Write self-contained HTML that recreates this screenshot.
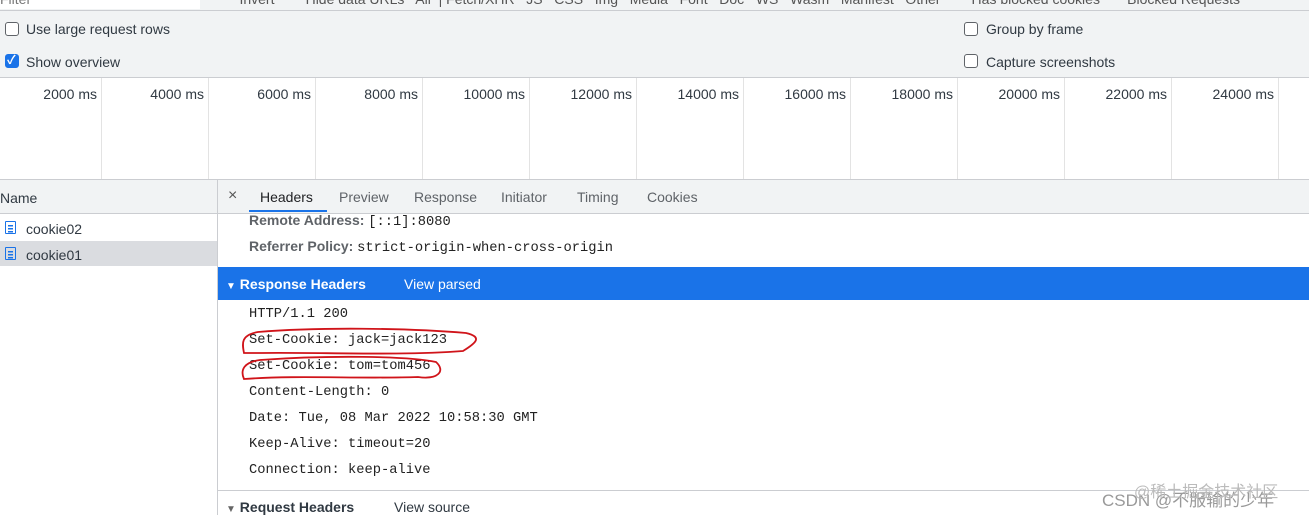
<!DOCTYPE html>
<html><head><meta charset="utf-8"><style>
*{margin:0;padding:0;box-sizing:border-box}
body{width:1309px;height:515px;overflow:hidden;background:#fff;font-family:"Liberation Sans","Noto Sans CJK SC",sans-serif;font-size:14px;color:#303942;position:relative}
.a{position:absolute;white-space:nowrap}
.cb{position:absolute;width:14px;height:14px;border:1.5px solid #5f6368;border-radius:3px;background:#fff}
.cb.on{background:#1a73e8;border-color:#1a73e8}
.mono{font-family:"Liberation Mono",monospace;font-size:13.75px;color:#222}
.doc{position:absolute;width:11px;height:13px;border:1.5px solid #1a73e8;border-radius:1px;background:linear-gradient(#1a73e8,#1a73e8) 2px 3px/5px 1.5px no-repeat,linear-gradient(#1a73e8,#1a73e8) 2px 6px/5px 1.5px no-repeat,linear-gradient(#1a73e8,#1a73e8) 2px 9px/5px 1.5px no-repeat}
</style></head><body>
<div class="a" style="left:0;top:0;width:1309px;height:78px;background:#f1f3f4;border-bottom:1px solid #cbcdd1"></div>
<div class="a" style="left:0;top:0;width:200px;height:9px;background:#fff"></div>
<div class="a" style="left:0;top:10px;width:1309px;height:1px;background:#cbcdd1"></div>
<div class="a" style="left:0;top:-9px;color:#777">Filter</div>
<div class="a" style="left:220px;top:-9px;color:#555">&nbsp;&nbsp;&nbsp;&nbsp;&nbsp;Invert &nbsp;&nbsp;&nbsp;&nbsp;&nbsp;&nbsp; Hide data URLs &nbsp; All &nbsp;| Fetch/XHR &nbsp; JS &nbsp; CSS &nbsp; Img &nbsp; Media &nbsp; Font &nbsp; Doc &nbsp; WS &nbsp; Wasm &nbsp; Manifest &nbsp; Other &nbsp;&nbsp;&nbsp;&nbsp;&nbsp;&nbsp; Has blocked cookies &nbsp;&nbsp;&nbsp;&nbsp;&nbsp; Blocked Requests</div>
<div class="cb" style="left:5px;top:22px"></div><div class="a" style="left:26px;top:21px">Use large request rows</div>
<div class="cb on" style="left:5px;top:54px"></div><div class="a" style="left:7px;top:51px;color:#fff;font-size:12px;font-weight:bold">✓</div><div class="a" style="left:26px;top:54px">Show overview</div>
<div class="cb" style="left:964px;top:22px"></div><div class="a" style="left:986px;top:21px">Group by frame</div>
<div class="cb" style="left:964px;top:54px"></div><div class="a" style="left:986px;top:54px">Capture screenshots</div>
<div class="a" style="left:0;top:179px;width:1309px;height:1px;background:#cbcdd1"></div>
<div id="grid"></div>
<script>
var g='',xs=[101,208,315,422,529,636,743,850,957,1064,1171,1278];
for(var i=0;i<12;i++){g+='<div class="a" style="left:'+xs[i]+'px;top:78px;width:1px;height:101px;background:#e3e3e3"></div><div class="a" style="left:'+(xs[i]-200)+'px;width:196px;text-align:right;top:86px">'+(2000*(i+1))+' ms</div>';}
document.getElementById('grid').innerHTML=g;
</script>
<div class="a" style="left:0;top:180px;width:217px;height:34px;background:#f1f3f4;border-bottom:1px solid #cbcdd1"></div>
<div class="a" style="left:0;top:190px">Name</div>
<div class="a" style="left:217px;top:180px;width:1px;height:335px;background:#cbcdd1"></div>
<div class="a" style="left:0;top:241px;width:217px;height:25px;background:#dadce0"></div>
<div class="doc" style="left:5px;top:221px"></div>
<div class="doc" style="left:5px;top:247px"></div>
<div class="a" style="left:26px;top:221px">cookie02</div>
<div class="a" style="left:26px;top:247px">cookie01</div>
<div class="a" style="left:218px;top:180px;width:1091px;height:34px;background:#f1f3f4;border-bottom:1px solid #cbcdd1"></div>
<div class="a" style="left:228px;top:187px;font-size:16px;color:#555">×</div>
<div class="a" style="left:260px;top:189px;color:#202124">Headers</div>
<div class="a" style="left:249px;top:210px;width:78px;height:2px;background:#1a73e8"></div>
<div class="a" style="left:339px;top:189px;color:#5f6368">Preview</div>
<div class="a" style="left:414px;top:189px;color:#5f6368">Response</div>
<div class="a" style="left:501px;top:189px;color:#5f6368">Initiator</div>
<div class="a" style="left:577px;top:189px;color:#5f6368">Timing</div>
<div class="a" style="left:647px;top:189px;color:#5f6368">Cookies</div>
<div class="a" style="left:249px;top:212px;font-weight:bold;color:#5f6368">Remote Address: <span class="mono" style="font-weight:normal">[::1]:8080</span></div>
<div class="a" style="left:249px;top:238px;font-weight:bold;color:#5f6368">Referrer Policy: <span class="mono" style="font-weight:normal">strict-origin-when-cross-origin</span></div>
<div class="a" style="left:218px;top:267px;width:1091px;height:33px;background:#1a73e8"></div>
<div class="a" style="left:226px;top:276px;color:#fff;font-weight:bold"><span style="font-size:10px">▼</span> Response Headers</div>
<div class="a" style="left:404px;top:276px;color:#fff">View parsed</div>
<div class="a mono" style="left:249px;top:307px">HTTP/1.1 200</div>
<div class="a mono" style="left:249px;top:333px">Set-Cookie: jack=jack123</div>
<div class="a mono" style="left:249px;top:359px">Set-Cookie: tom=tom456</div>
<div class="a mono" style="left:249px;top:385px">Content-Length: 0</div>
<div class="a mono" style="left:249px;top:411px">Date: Tue, 08 Mar 2022 10:58:30 GMT</div>
<div class="a mono" style="left:249px;top:437px">Keep-Alive: timeout=20</div>
<div class="a mono" style="left:249px;top:463px">Connection: keep-alive</div>
<svg class="a" style="left:238px;top:325px" width="245" height="60" viewBox="0 0 245 60">
<path d="M6 28 C4 18 3 10 20 7 C80 2 170 3 228 8 C245 12 238 18 225 26 C160 31 80 27 20 28 Z" fill="none" stroke="#d0141a" stroke-width="1.8"/>
<path d="M6 54 C2 45 6 37 22 35 C90 30 170 31 198 37 C208 46 200 55 180 52 C120 54 60 50 6 54 Z" fill="none" stroke="#d0141a" stroke-width="1.8"/>
</svg>
<div class="a" style="left:218px;top:490px;width:1091px;height:1px;background:#cbcdd1"></div>
<div class="a" style="left:226px;top:499px;color:#303942;font-weight:bold"><span style="font-size:10px;color:#666">▼</span> Request Headers</div>
<div class="a" style="left:394px;top:499px">View source</div>
<div class="a" style="left:1102px;top:486px;font-size:17px;color:#999">CSDN @不服输的少年</div>
<div class="a" style="left:1134px;top:478px;font-size:16px;color:#bbb">@稀土掘金技术社区</div>
</body></html>
